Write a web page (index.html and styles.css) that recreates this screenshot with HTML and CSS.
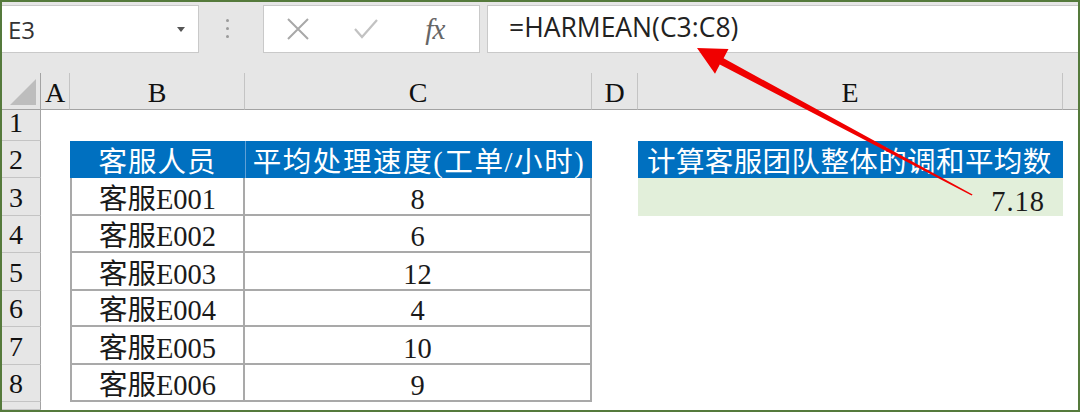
FILE: index.html
```html
<!DOCTYPE html>
<html lang="zh-CN">
<head>
<meta charset="utf-8">
<title>HARMEAN</title>
<link rel="stylesheet" href="styles.css">
</head>
<body>
<div class="frame">
  <div class="fbar">
    <div class="namebox">
      <span class="ref">E3</span>
      <span class="caret"></span>
    </div>
    <div class="grip"><i></i><i></i><i></i></div>
    <div class="btns">
      <span class="slot">
        <svg width="24" height="24" viewBox="0 0 24 24"><path d="M2 2 L22 22 M22 2 L2 22" stroke="#A8A8A8" stroke-width="2" fill="none"/></svg>
      </span>
      <span class="slot">
        <svg width="26" height="24" viewBox="0 0 26 24"><path d="M2 12 L9 20 L24 3" stroke="#C2C2C2" stroke-width="2.2" fill="none"/></svg>
      </span>
      <span class="slot fx">fx</span>
    </div>
    <div class="formula">=HARMEAN(C3:C8)</div>
  </div>
  <div class="sheet">
    <div class="ch corner"><span class="tri"></span></div>
    <div class="ch">A</div>
    <div class="ch">B</div>
    <div class="ch">C</div>
    <div class="ch">D</div>
    <div class="ch">E</div>
    <div class="ch last"></div>

    <div class="rh">1</div><div class="c"></div><div class="c"></div><div class="c"></div><div class="c"></div><div class="c"></div><div class="c"></div>

    <div class="rh">2</div><div class="c"></div>
    <div class="c hd">客服人员</div>
    <div class="c hd hdl">平均处理速度(工单/小时)</div>
    <div class="c"></div>
    <div class="c hd hdr">计算客服团队整体的调和平均数</div>
    <div class="c"></div>

    <div class="rh">3</div><div class="c"></div>
    <div class="c td tb">客服E001</div><div class="c td">8</div>
    <div class="c"></div><div class="c res">7.18</div><div class="c"></div>

    <div class="rh">4</div><div class="c"></div>
    <div class="c td tb">客服E002</div><div class="c td">6</div>
    <div class="c"></div><div class="c"></div><div class="c"></div>

    <div class="rh">5</div><div class="c"></div>
    <div class="c td tb">客服E003</div><div class="c td">12</div>
    <div class="c"></div><div class="c"></div><div class="c"></div>

    <div class="rh">6</div><div class="c"></div>
    <div class="c td tb">客服E004</div><div class="c td">4</div>
    <div class="c"></div><div class="c"></div><div class="c"></div>

    <div class="rh">7</div><div class="c"></div>
    <div class="c td tb">客服E005</div><div class="c td">10</div>
    <div class="c"></div><div class="c"></div><div class="c"></div>

    <div class="rh">8</div><div class="c"></div>
    <div class="c td tb">客服E006</div><div class="c td">9</div>
    <div class="c"></div><div class="c"></div><div class="c"></div>

    <div class="rh"></div><div class="c"></div><div class="c"></div><div class="c"></div><div class="c"></div><div class="c"></div><div class="c"></div>
  </div>
  <svg class="arrow" width="1080" height="412" viewBox="0 0 1080 412">
    <polygon points="697,48 728.5,49 723.6,58.3 972.6,194.6 971.6,195.6 719.8,64.4 715,73.8" fill="#F00000"/>
  </svg>
</div>
</body>
</html>
```
FILE: styles.css
```css
html, body {
  margin: 0;
  padding: 0;
  background: #fff;
}
.frame {
  position: relative;
  width: 1080px;
  height: 412px;
  box-sizing: border-box;
  border: 2px solid #557A3C;
  background: #E6E6E6;
  overflow: hidden;
  font-family: "Liberation Serif", "Noto Sans CJK SC", serif;
  color: #111;
}
.fbar {
  height: 71px;
  box-sizing: border-box;
  padding-top: 3px;
  display: flex;
  align-items: flex-start;
  background: #E6E6E6;
}
.namebox {
  width: 197px;
  height: 48px;
  box-sizing: border-box;
  background: #fff;
  border: 1px solid #C9C9C9;
  border-left: none;
  display: flex;
  align-items: center;
  justify-content: space-between;
  padding: 0 13px 0 6px;
  font-family: "Open Sans", "Noto Sans", sans-serif;
  font-size: 24px;
  color: #333;
}
.caret {
  width: 0;
  height: 0;
  border-left: 4px solid transparent;
  border-right: 4px solid transparent;
  border-top: 5px solid #555;
  margin-top: 1px;
}
.grip {
  width: 64px;
  height: 48px;
  box-sizing: border-box;
  display: flex;
  flex-direction: column;
  align-items: flex-start;
  padding: 14px 0 0 27px;
  gap: 5px;
}
.grip i {
  display: block;
  width: 3px;
  height: 3px;
  border-radius: 50%;
  background: #9A9A9A;
}
.btns {
  width: 217px;
  height: 48px;
  box-sizing: border-box;
  background: #fff;
  border: 1px solid #C9C9C9;
  display: flex;
  align-items: center;
}
.slot {
  width: 72px;
  display: flex;
  justify-content: center;
  align-items: center;
}
.fx {
  font-family: "Liberation Serif", serif;
  font-style: italic;
  font-size: 29px;
  color: #666;
  letter-spacing: -1px;
  padding-right: 10px;
}
.formula {
  flex: 1;
  height: 48px;
  box-sizing: border-box;
  margin-left: 7px;
  background: #fff;
  border: 1px solid #C9C9C9;
  border-right: none;
  padding: 0 0 5px 21px;
  display: flex;
  align-items: center;
  font-family: "Open Sans", "Noto Sans", sans-serif;
  font-size: 26.5px;
  color: #222;
}
.sheet {
  display: grid;
  grid-template-columns: 39px 29px 175px 347px 46px 425px 1fr;
  grid-template-rows: 37px 31px 37px 38px 37px 38px 36px 38px 37px 1fr;
  height: 337px;
  background: #fff;
}
.ch {
  background: #E6E6E6;
  border-right: 1px solid #C4C4C4;
  border-bottom: 1px solid #A3A3A3;
  box-sizing: border-box;
  display: flex;
  align-items: flex-end;
  justify-content: center;
  font-size: 28px;
  line-height: 33px;
  color: #111;
}
.ch.last {
  border-right: none;
}
.corner {
  position: relative;
  border-right-color: #A3A3A3;
}
.tri {
  position: absolute;
  right: 4px;
  bottom: 4px;
  width: 0;
  height: 0;
  border-left: 26px solid transparent;
  border-bottom: 26px solid #BDBDBD;
}
.rh {
  background: #E6E6E6;
  border-right: 1px solid #A3A3A3;
  border-bottom: 1px solid #C4C4C4;
  box-sizing: border-box;
  display: flex;
  align-items: flex-end;
  padding-left: 7px;
  font-size: 28px;
  line-height: 34px;
  color: #111;
}
.c {
  box-sizing: border-box;
  background: #fff;
  display: flex;
  align-items: flex-end;
  justify-content: center;
  font-size: 28.5px;
  line-height: 29px;
  white-space: nowrap;
  overflow: hidden;
}
.hd {
  background: #0070C0;
  color: #fff;
  letter-spacing: 1px;
  line-height: 31px;
}
.hdl {
  border-left: 1px solid #5FA0D6;
  letter-spacing: 1.6px;
}
.hdr {
  justify-content: flex-start;
  padding-left: 9px;
  letter-spacing: 0.4px;
}
.td {
  border-right: 2px solid #A9A9A9;
  border-bottom: 2px solid #A9A9A9;
  color: #1A1A1A;
}
.tb {
  border-left: 2px solid #A9A9A9;
}
.res {
  background: #E2EFDA;
  justify-content: flex-end;
  padding-right: 18px;
  color: #1A1A1A;
  letter-spacing: 1px;
}
.arrow {
  position: absolute;
  left: -2px;
  top: -2px;
}
```
